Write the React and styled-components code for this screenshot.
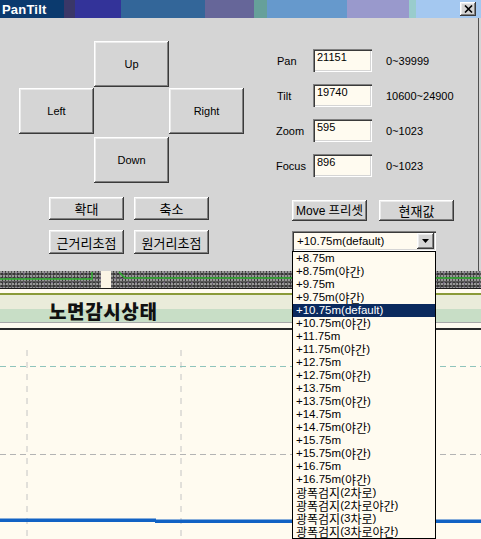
import React from 'react';
import styled, { createGlobalStyle, css } from 'styled-components';

const GlobalStyle = createGlobalStyle`
  html, body { margin: 0; padding: 0; background: #fffbf0; }
  body {
    width: 481px; height: 539px; overflow: hidden;
    font-family: "Liberation Sans", "Noto Sans CJK KR", sans-serif;
    color: #000;
  }
  * { box-sizing: border-box; }
`;

const raised = css`
  background: #d5d5d5;
  border: none;
  box-shadow:
    inset -1px -1px 0 #3a3a3a,
    inset 1px 1px 0 #ffffff,
    inset -2px -2px 0 #808080,
    inset 2px 2px 0 #ececec;
`;

const sunken = css`
  box-shadow:
    inset 1px 1px 0 #808080,
    inset 2px 2px 0 #3a3a3a,
    inset -1px -1px 0 #ffffff,
    inset -2px -2px 0 #d5d5d5;
`;

const Page = styled.div`
  width: 481px;
  height: 539px;
  display: flex;
  flex-direction: column;
  position: relative;
  overflow: hidden;
  background: #fffbf0;
`;

const Dialog = styled.div`
  height: 271px;
  flex-shrink: 0;
  display: flex;
  flex-direction: column;
  background: #d5d5d5;
  position: relative;
  z-index: 2;
`;

const TitleBar = styled.div`
  height: 18px;
  flex-shrink: 0;
  display: flex;
  align-items: center;
  justify-content: space-between;
  padding: 0 5px 0 2px;
  background: linear-gradient(to right,
    #0b3a6e 0 64px, #3a3768 64px 75px, #333399 75px 121px,
    #336699 121px 205px, #666699 205px 254px, #66a09a 254px 267px,
    #6699cc 267px 347px, #9999cc 347px 409px, #99cccc 409px 416px,
    #a4c8f0 416px);
`;

const Title = styled.span`
  color: #fff;
  font-weight: bold;
  font-size: 13px;
  letter-spacing: 0.2px;
`;

const CloseButton = styled.button`
  ${raised}
  width: 16px;
  height: 14px;
  padding: 0;
  display: flex;
  align-items: center;
  justify-content: center;
`;

const DialogBody = styled.div`
  flex: 1;
  display: flex;
  box-shadow: inset -2px 0 0 #d5d5d5, inset -3px 0 0 #505050;
`;

const LeftColumn = styled.div`
  width: 257px;
  padding: 23px 0 0 19px;
  display: flex;
  flex-direction: column;
`;

const DirectionPad = styled.div`
  display: grid;
  grid-template-columns: repeat(3, 75px);
  grid-template-rows: 47px 49px 47px;
  grid-template-areas:
    ". up ."
    "left . right"
    ". down .";
`;

const PadButton = styled.button`
  ${raised}
  grid-area: ${(p) => p.$area};
  height: 46px;
  font: 11px "Liberation Sans", sans-serif;
  color: #000;
  padding: 0;
`;

const ActionGrid = styled.div`
  margin: 13px 0 0 30px;
  display: grid;
  grid-template-columns: 75px 75px;
  grid-template-rows: 23px 24px;
  column-gap: 10px;
  row-gap: 10px;
`;

const ActionButton = styled.button`
  ${raised}
  font: 13px "Noto Sans CJK KR", sans-serif;
  color: #000;
  padding: 0;
`;

const RightColumn = styled.div`
  flex: 1;
  padding: 31px 0 0 19px;
  display: flex;
  flex-direction: column;
`;

const FieldGrid = styled.div`
  display: grid;
  grid-template-columns: 37px 59px auto;
  grid-auto-rows: 23px;
  row-gap: 12px;
  align-items: center;
`;

const FieldLabel = styled.span`
  font-size: 11px;
  padding-left: ${(p) => p.$indent || 0}px;
`;

const FieldInput = styled.input`
  ${sunken}
  width: 59px;
  height: 23px;
  border: none;
  outline: none;
  background: #fffbf0;
  font: 11px "Liberation Sans", sans-serif;
  color: #000;
  padding: 0 2px 7px 4px;
`;

const RangeText = styled.span`
  font-size: 11px;
  padding-left: 14px;
`;

const PresetRow = styled.div`
  margin: 23px 0 0 16px;
  display: flex;
  gap: 12px;
`;

const PresetButton = styled.button`
  ${raised}
  width: 75px;
  height: 21px;
  padding: 0;
  display: flex;
  align-items: center;
  justify-content: center;
  gap: 3px;
  font: 12px "Liberation Sans", "Noto Sans CJK KR", sans-serif;
  color: #000;
  white-space: nowrap;
`;

const Hangul = styled.span`
  font-family: "Noto Sans CJK KR", sans-serif;
  font-size: ${(p) => p.$size || 12}px;
  line-height: 1;
`;

const Combo = styled.div`
  ${sunken}
  position: relative;
  margin: 10px 0 0 16px;
  width: 144px;
  height: 20px;
  background: #fffbf0;
  display: flex;
  align-items: center;
  justify-content: space-between;
  padding: 2px 2px 2px 5px;
  font-size: 11.5px;
`;

const ComboArrow = styled.span`
  ${raised}
  width: 17px;
  height: 16px;
  display: flex;
  align-items: center;
  justify-content: center;
`;

const DropList = styled.ul`
  position: absolute;
  top: 100%;
  left: 0;
  width: 144px;
  margin: 0;
  padding: 0;
  list-style: none;
  border: 1px solid #000;
  background: #fffbf0;
  z-index: 10;
`;

const DropItem = styled.li`
  height: 13px;
  display: flex;
  align-items: center;
  padding-left: 3px;
  font-size: 11.5px;
  line-height: 1;
  white-space: pre;
  background: ${(p) => (p.$selected ? '#0b2a5e' : 'transparent')};
  color: ${(p) => (p.$selected ? '#fff' : '#000')};
`;

const MapStrip = styled.div`
  height: 17px;
  flex-shrink: 0;
  background:
    radial-gradient(circle at 1px 1px, #9a9a9a 0.7px, transparent 1.1px) 0 0 / 3px 4px,
    radial-gradient(circle at 1px 1px, #383838 0.8px, transparent 1.2px) 1px 2px / 4px 3px,
    radial-gradient(circle at 1px 1px, #7a6a8a 0.6px, transparent 1px) 2px 1px / 7px 5px,
    #575757;
  display: flex;
`;

const StatusHeader = styled.div`
  flex-shrink: 0;
  border-top: 1px solid #1a1a1a;
  padding: 4px 0 5px;
  border-bottom: 2px solid #2a2a2a;
  background: #fffbf0;
`;

const HeaderBand = styled.div`
  height: 30px;
  border-top: 2px solid #8a9a38;
  border-bottom: 1px solid #a8a8a8;
  background: linear-gradient(to bottom, #eaecda 0 52%, #c8dec6 52% 100%);
  display: flex;
  align-items: center;
  padding: 4px 0 0 49px;
`;

const HeaderTitle = styled.h1`
  margin: 0;
  font: 900 19px "Noto Sans CJK KR", sans-serif;
  letter-spacing: 0.6px;
  color: #111;
`;

const Chart = styled.div`
  flex: 1;
  display: flex;
`;

function Mixed({ text, size }) {
  return text.split(/([\uAC00-\uD7A3]+)/).filter(Boolean).map((part, i) =>
    /[\uAC00-\uD7A3]/.test(part) ? <Hangul key={i} $size={size}>{part}</Hangul> : <span key={i}>{part}</span>
  );
}

const items = [
  '+8.75m', '+8.75m(야간)', '+9.75m', '+9.75m(야간)', '+10.75m(default)', '+10.75m(야간)',
  '+11.75m', '+11.75m(야간)', '+12.75m', '+12.75m(야간)', '+13.75m', '+13.75m(야간)',
  '+14.75m', '+14.75m(야간)', '+15.75m', '+15.75m(야간)', '+16.75m', '+16.75m(야간)',
  '광폭검지(2차로)', '광폭검지(2차로야간)', '광폭검지(3차로)', '광폭검지(3차로야간)',
];

const fields = [
  { label: 'Pan', value: '21151', range: '0~39999', indent: 1 },
  { label: 'Tilt', value: '19740', range: '10600~24900', indent: 1 },
  { label: 'Zoom', value: '595', range: '0~1023', indent: 0 },
  { label: 'Focus', value: '896', range: '0~1023', indent: 0 },
];

export default function App() {
  return (
    <Page>
      <GlobalStyle />
      <Dialog>
        <TitleBar>
          <Title>PanTilt</Title>
          <CloseButton aria-label="close">
            <svg width="9" height="8" viewBox="0 0 9 8">
              <path d="M1 0.5 L8 7.5 M8 0.5 L1 7.5" stroke="#000" strokeWidth="1.6" />
            </svg>
          </CloseButton>
        </TitleBar>
        <DialogBody>
          <LeftColumn>
            <DirectionPad>
              <PadButton $area="up">Up</PadButton>
              <PadButton $area="left">Left</PadButton>
              <PadButton $area="right">Right</PadButton>
              <PadButton $area="down">Down</PadButton>
            </DirectionPad>
            <ActionGrid>
              <ActionButton>확대</ActionButton>
              <ActionButton>축소</ActionButton>
              <ActionButton>근거리초점</ActionButton>
              <ActionButton>원거리초점</ActionButton>
            </ActionGrid>
          </LeftColumn>
          <RightColumn>
            <FieldGrid>
              {fields.map((f) => (
                <React.Fragment key={f.label}>
                  <FieldLabel $indent={f.indent}>{f.label}</FieldLabel>
                  <FieldInput readOnly value={f.value} />
                  <RangeText>{f.range}</RangeText>
                </React.Fragment>
              ))}
            </FieldGrid>
            <PresetRow>
              <PresetButton><span>Move</span><Hangul $size={12.5}>프리셋</Hangul></PresetButton>
              <PresetButton><Hangul $size={13}>현재값</Hangul></PresetButton>
            </PresetRow>
            <Combo>
              <span>+10.75m(default)</span>
              <ComboArrow>
                <svg width="7" height="4" viewBox="0 0 7 4">
                  <path d="M0 0 H7 L3.5 4 Z" fill="#000" />
                </svg>
              </ComboArrow>
              <DropList>
                {items.map((it, i) => (
                  <DropItem key={it} $selected={i === 4}>
                    <Mixed text={it} size={12} />
                  </DropItem>
                ))}
              </DropList>
            </Combo>
          </RightColumn>
        </DialogBody>
      </Dialog>
      <MapStrip>
        <svg width="481" height="17" viewBox="0 0 481 17">
          <path d="M0 8 H92 V1" stroke="#2fae2f" strokeWidth="1.5" fill="none" />
          <path d="M119 1 L125 7 H481" stroke="#2fae2f" strokeWidth="1.5" fill="none" />
          <rect x="101" y="0" width="10" height="17" fill="#fbf5e6" />
        </svg>
      </MapStrip>
      <StatusHeader>
        <HeaderBand>
          <HeaderTitle>노면감시상태</HeaderTitle>
        </HeaderBand>
      </StatusHeader>
      <Chart>
        <svg width="481" height="209" viewBox="0 0 481 209">
          <line x1="27" y1="20" x2="27" y2="209" stroke="#c4c4c4" strokeDasharray="6 6" />
          <line x1="181" y1="20" x2="181" y2="209" stroke="#c4c4c4" strokeDasharray="6 6" />
          <line x1="0" y1="36.5" x2="481" y2="36.5" stroke="#8fc4bc" strokeDasharray="6 4" />
          <line x1="0" y1="124.5" x2="481" y2="124.5" stroke="#b4b4b4" strokeDasharray="6 4" />
          <path d="M0 190.3 H156" stroke="#1262c4" strokeWidth="3.6" fill="none" />
          <path d="M155 191.3 H481" stroke="#1262c4" strokeWidth="3.6" fill="none" />
        </svg>
      </Chart>
    </Page>
  );
}
